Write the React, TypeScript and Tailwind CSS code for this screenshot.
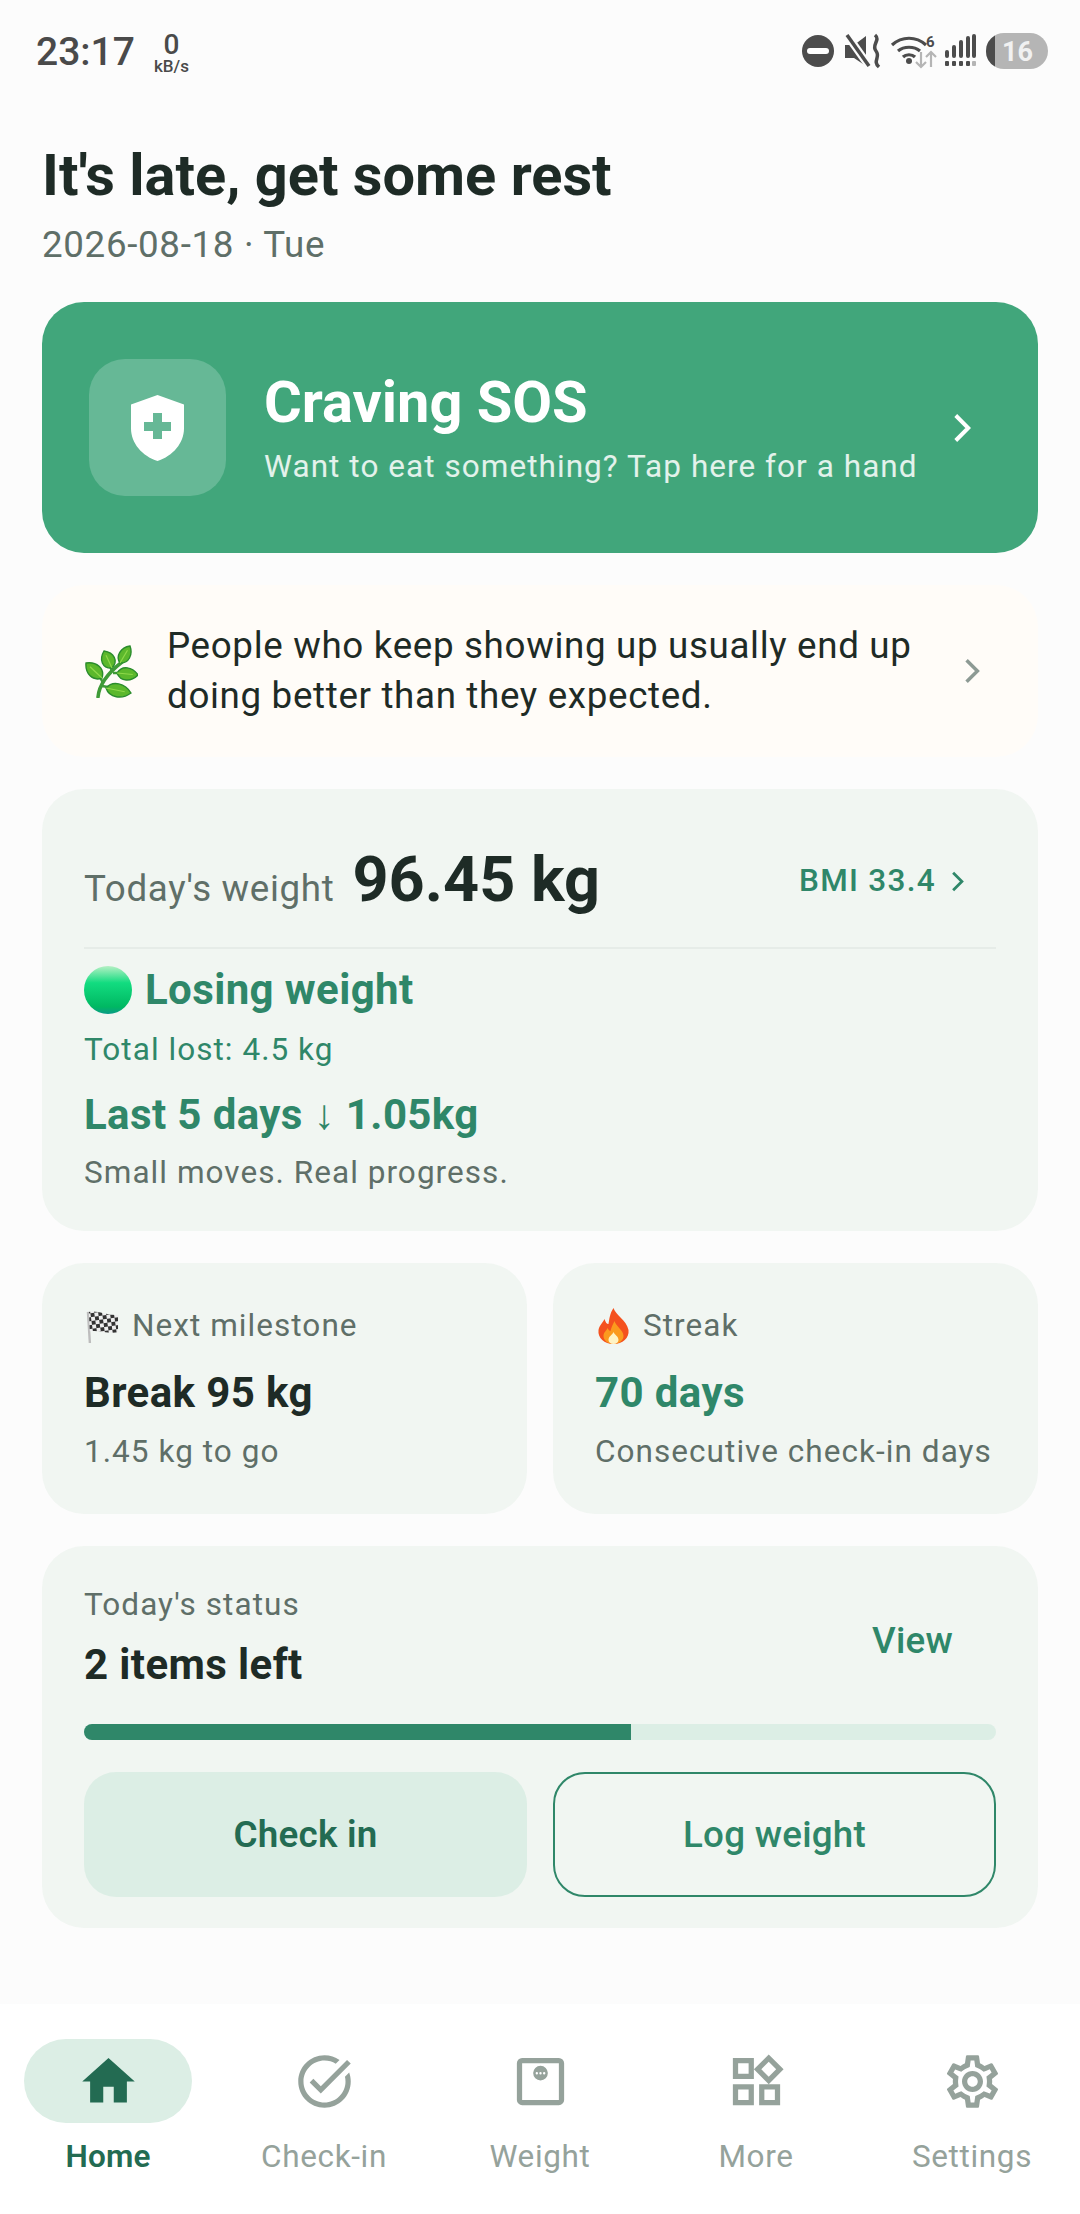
import type { ReactNode } from 'react'

const FONT = "font-['Roboto','Noto_Sans',sans-serif]"

function Chevron({ className }: { className: string }) {
  return (
    <svg viewBox="0 0 14 24" fill="none" stroke="currentColor" strokeWidth="3.2" className={className}>
      <path d="M2 2l10 10L2 22" />
    </svg>
  )
}

function StatusBar() {
  return (
    <div className="flex h-[102px] items-start justify-between pl-[36px] pr-[32px] pt-[33px] text-[#4a4a4a]">
      <div className="flex items-start">
        <span className="mt-[-1px] text-[39px] leading-[40px] font-medium">23:17</span>
        <div className="ml-[19px] flex flex-col items-center">
          <span className="text-[28px] leading-[24px] font-medium">0</span>
          <span className="mt-[1px] text-[17px] leading-[16px] font-medium">kB/s</span>
        </div>
      </div>
      <svg viewBox="0 0 246 36" className="h-[36px] w-[246px]">
        {/* dnd */}
        <circle cx="16" cy="18" r="16" fill="#4c4c4c" />
        <rect x="5" y="15" width="22" height="6" rx="3" fill="#fff" />
        {/* mute */}
        <path d="M43 12h9L64 3v30L52 25h-9z" fill="#4c4c4c" />
        <path d="M45 2l22 31" stroke="#fcfcfc" strokeWidth="8" />
        <path d="M45 2l22 31" stroke="#4c4c4c" strokeWidth="3.5" />
        <path d="M73 2c6 5-4 10 1 16 5 6-4 10 3 16" stroke="#4c4c4c" strokeWidth="3.5" fill="none" />
        {/* wifi */}
        <g fill="none" stroke="#4c4c4c" strokeWidth="3.2" transform="translate(2 0)">
          <path d="M88 12c10-9 24-9 34 0" />
          <path d="M94 18c6-5 16-5 22 0" />
          <path d="M99 24c3-3 9-3 12 0" />
        </g>
        <circle cx="107" cy="28" r="3" fill="#4c4c4c" />
        <text x="124" y="14" fontSize="15" fontWeight="700" fill="#4c4c4c">6</text>
        <path d="M119 19v15m-5-5l5 5 5-5M129 34V19m-5 5l5-5 5 5" stroke="#b5b5b5" strokeWidth="2.2" fill="none" />
        {/* signal */}
        <g fill="#4c4c4c">
          <rect x="143" y="17" width="4" height="8" rx="2" />
          <rect x="150" y="12" width="4" height="13" rx="2" />
          <rect x="157" y="7" width="4" height="18" rx="2" />
          <rect x="164" y="3" width="4" height="22" rx="2" />
          <rect x="170" y="1" width="4" height="24" rx="2" />
          <rect x="143" y="28" width="4" height="5" rx="1" />
          <rect x="150" y="28" width="4" height="5" rx="1" />
          <rect x="157" y="28" width="4" height="5" rx="1" />
          <rect x="164" y="28" width="4" height="5" rx="1" />
        </g>
        <rect x="170" y="28" width="4" height="5" rx="1" fill="#b5b5b5" />
        {/* battery */}
        <rect x="184" y="0" width="62" height="36" rx="18" fill="#b5b5b5" />
        <path d="M193 2.4A18 18 0 0 0 193 33.6z" fill="#4c4c4c" />
        <text x="200" y="28" fontSize="27" fontWeight="700" fill="#f1f1f1">16</text>
      </svg>
    </div>
  )
}

function SosCard() {
  return (
    <div className="flex h-[251px] items-center rounded-[42px] bg-[#41a67b] pl-[47px] pr-[67px]">
      <div className="flex h-[137px] w-[137px] shrink-0 items-center justify-center rounded-[36px] bg-[#66b896]">
        <svg viewBox="0 0 53 66" className="h-[66px] w-[53px]">
          <path fillRule="evenodd" fill="#fff" d="M26.5 0L53 9.5v24C53 48 42 61 26.5 66 11 61 0 48 0 33.5v-24zM22 18v9h-9v9h9v8h9v-8h9v-9h-9v-9z" />
        </svg>
      </div>
      <div className="ml-[38px] flex-1 pt-[4px]">
        <div className="text-[57.75px] leading-[60px] font-bold text-white">Craving SOS</div>
        <div className="mt-[15px] text-[31.5px] leading-[40px] tracking-[1.05px] text-white/85">Want to eat something? Tap here for a hand</div>
      </div>
      <Chevron className="h-[30px] w-[18px] text-white" />
    </div>
  )
}

// leaf from base to tip, w = half width
function leaf(bx: number, by: number, tx: number, ty: number, w: number) {
  const dx = tx - bx
  const dy = ty - by
  const len = Math.hypot(dx, dy)
  const nx = (-dy / len) * w
  const ny = (dx / len) * w
  const p = (f: number, s: number) => `${bx + dx * f + nx * s} ${by + dy * f + ny * s}`
  return `M${bx} ${by}C${p(0.2, 1.3)} ${p(0.7, 1.2)} ${tx} ${ty}C${p(0.7, -1.2)} ${p(0.2, -1.3)} ${bx} ${by}Z`
}

function Herb() {
  const leaves = [
    [27, 23, 19, 6, 7],
    [35, 18, 45, 1, 6],
    [17, 33, 1, 18, 7],
    [32, 28, 53, 30, 6.5],
    [21, 43, 46, 48, 7],
  ]
  return (
    <svg viewBox="0 0 53 53" className="h-[53px] w-[53px] shrink-0">
      <path d="M13 52c1-12 10-24 24-35" stroke="#3f9b38" strokeWidth="3.5" fill="none" strokeLinecap="round" />
      <path d="M28 28h8M17 41l6 1M18 38l-3-6M27 26l-2-5" stroke="#3f9b38" strokeWidth="2.5" />
      {leaves.map(([bx, by, tx, ty, w], i) => (
        <g key={i}>
          <path d={leaf(bx, by, tx, ty, w)} fill="#5cb82c" stroke="#2a8c2c" strokeWidth="1.4" />
          <path d={`M${bx} ${by}L${bx + (tx - bx) * 0.75} ${by + (ty - by) * 0.75}`} stroke="#8fd84a" strokeWidth="1.2" />
        </g>
      ))}
    </svg>
  )
}

function GreenDot() {
  return (
    <svg viewBox="0 0 48 48" className="h-[48px] w-[48px] shrink-0">
      <defs>
        <linearGradient id="dot" x1="0" y1="0" x2="0" y2="1">
          <stop offset="0" stopColor="#b5f0c4" />
          <stop offset="0.35" stopColor="#12dc80" />
          <stop offset="0.85" stopColor="#00b862" />
          <stop offset="1" stopColor="#0a9a88" />
        </linearGradient>
      </defs>
      <circle cx="24" cy="24" r="24" fill="url(#dot)" />
    </svg>
  )
}

function Flag() {
  return (
    <svg viewBox="0 0 34 34" className="h-[33px] w-[33px] shrink-0">
      <defs>
        <pattern id="check" width="8" height="8" patternUnits="userSpaceOnUse" patternTransform="rotate(-8)">
          <rect width="8" height="8" fill="#eee" />
          <rect width="4" height="4" fill="#333" />
          <rect x="4" y="4" width="4" height="4" fill="#333" />
        </pattern>
      </defs>
      <path d="M2 2l2 32" stroke="#bdbdbd" strokeWidth="2.5" />
      <path d="M3 2c9-2 18 4 30 3v18c-11 2-20-3-29-1z" fill="url(#check)" />
    </svg>
  )
}

function Fire() {
  return (
    <svg viewBox="0 0 32 36" className="h-[36px] w-[33px] shrink-0">
      <path d="M16 0c2 7 13 12 15 22 1 8-6 14-15 14S0 30 1 22c1-5 4-7 6-11 1 3 2 5 4 5 1-5 1-10 5-16z" fill="#f4511e" />
      <path d="M17 13c1 5 9 9 9 15 0 4-4 8-10 8S6 32 6 28c0-4 3-5 4-8 1 2 2 3 3 3 1-4 2-6 4-10z" fill="#fb9a1e" />
      <path d="M16 24c1 3 5 4 5 8 0 2-2 4-5 4s-5-2-5-4c0-4 4-5 5-8z" fill="#fff3c4" />
    </svg>
  )
}

function Card({ className, children }: { className: string; children: ReactNode }) {
  return <div className={`rounded-[42px] bg-[#f1f6f2] ${className}`}>{children}</div>
}

function Stat({ icon, label, value, valueColor, note }: { icon: ReactNode; label: string; value: string; valueColor: string; note: string }) {
  return (
    <Card className="h-[251px] pl-[42px] pt-[45px]">
      <div className="flex h-[36px] items-center gap-[13px] pl-[2px] text-[31.5px] tracking-[1.05px] text-[#5f6f68]">
        {icon}
        <span>{label}</span>
      </div>
      <div className={`mt-[24px] text-[42px] leading-[50px] font-bold tracking-[0.39px] ${valueColor}`}>{value}</div>
      <div className="mt-[14px] text-[31.5px] leading-[40px] tracking-[1.05px] text-[#5f6f68]">{note}</div>
    </Card>
  )
}

function NavItem({ label, active, path }: { label: string; active?: boolean; path: string }) {
  return (
    <div className="flex flex-col items-center">
      <div className={`flex h-[84px] w-[168px] items-center justify-center rounded-full ${active ? 'bg-[#dceee5]' : ''}`}>
        <svg viewBox="0 0 24 24" fillRule="evenodd" className={`h-[63px] w-[63px] ${active ? 'fill-[#236b52]' : 'fill-[#95a29b]'}`}>
          <path d={path} />
        </svg>
      </div>
      <span className={`mt-[14px] text-[31.5px] leading-[40px] ${active ? 'font-semibold tracking-[0.2px] text-[#236b52]' : 'tracking-[0.65px] text-[#95a29b]'}`}>{label}</span>
    </div>
  )
}

const HOME = 'M10 20v-6h4v6h5v-8h3L12 3 2 12h3v8z'
const CHECK = 'M22 5.18 10.59 16.6l-4.24-4.24 1.41-1.41 2.83 2.83 10-10L22 5.18zm-2.21 5.04c.13.57.21 1.17.21 1.78 0 4.42-3.58 8-8 8s-8-3.58-8-8 3.58-8 8-8c1.58 0 3.04.46 4.28 1.21l1.44-1.44C16.1 2.67 14.13 2 12 2 6.48 2 2 6.48 2 12s4.48 10 10 10 10-4.48 10-10c0-1.19-.22-2.33-.6-3.39l-1.61 1.61z'
const WEIGHT = 'M5 3h14a2 2 0 0 1 2 2v14a2 2 0 0 1-2 2H5a2 2 0 0 1-2-2V5a2 2 0 0 1 2-2zm0 2v14h14V5zm7 1a2.8 2.8 0 1 1 0 5.6A2.8 2.8 0 0 1 12 6zm-1.4 2.4a.45.45 0 1 0 0 .9.45.45 0 0 0 0-.9zm1.4 0a.45.45 0 1 0 0 .9.45.45 0 0 0 0-.9zm1.4 0a.45.45 0 1 0 0 .9.45.45 0 0 0 0-.9z'
const MORE = 'M16.66 4.52l2.83 2.83-2.83 2.83-2.83-2.83 2.83-2.83M9 5v4H5V5h4m10 10v4h-4v-4h4M9 15v4H5v-4h4m7.66-13.31L11 7.34 16.66 13l5.66-5.66-5.66-5.65zM11 3H3v8h8V3zm10 10h-8v8h8v-8zm-10 0H3v8h8v-8z'
const GEAR = 'M19.43 12.98c.04-.32.07-.64.07-.98 0-.34-.03-.66-.07-.98l2.11-1.65c.19-.15.24-.42.12-.64l-2-3.46c-.09-.16-.26-.25-.44-.25-.06 0-.12.01-.17.03l-2.49 1c-.52-.4-1.08-.73-1.69-.98l-.38-2.65C14.46 2.18 14.25 2 14 2h-4c-.25 0-.46.18-.49.42l-.38 2.65c-.61.25-1.17.59-1.69.98l-2.49-1c-.06-.02-.12-.03-.18-.03-.17 0-.34.09-.43.25l-2 3.46c-.13.22-.07.49.12.64l2.11 1.65c-.04.32-.07.65-.07.98 0 .33.03.66.07.98l-2.11 1.65c-.19.15-.24.42-.12.64l2 3.46c.09.16.26.25.44.25.06 0 .12-.01.17-.03l2.49-1c.52.4 1.08.73 1.69.98l.38 2.65c.03.24.24.42.49.42h4c.25 0 .46-.18.49-.42l.38-2.65c.61-.25 1.17-.59 1.69-.98l2.49 1c.06.02.12.03.18.03.17 0 .34-.09.43-.25l2-3.46c.12-.22.07-.49-.12-.64l-2.11-1.65zm-1.98-1.71c.04.31.05.52.05.73 0 .21-.02.43-.05.73l-.14 1.13.89.7 1.08.84-.7 1.21-1.27-.51-1.04-.42-.9.68c-.43.32-.84.56-1.25.73l-1.06.43-.16 1.13-.2 1.35h-1.4l-.19-1.35-.16-1.13-1.06-.43c-.43-.18-.83-.41-1.23-.71l-.91-.7-1.06.43-1.27.51-.7-1.21 1.08-.84.89-.7-.14-1.13c-.03-.31-.05-.54-.05-.74s.02-.43.05-.73l.14-1.13-.89-.7-1.08-.84.7-1.21 1.27.51 1.04.42.9-.68c.43-.32.84-.56 1.25-.73l1.06-.43.16-1.13.2-1.35h1.39l.19 1.35.16 1.13 1.06.43c.43.18.83.41 1.23.71l.91.7 1.06-.43 1.27-.51.7 1.21-1.07.85-.89.7.14 1.13zM12 8c-2.21 0-4 1.79-4 4s1.79 4 4 4 4-1.79 4-4-1.79-4-4-4zm0 6c-1.1 0-2-.9-2-2s.9-2 2-2 2 .9 2 2-.9 2-2 2z'

export default function App() {
  return (
    <div className={`flex h-[2214px] w-[1080px] flex-col bg-[#fcfcfc] ${FONT}`}>
      <StatusBar />
      <div className="flex-1 px-[42px]">
        <h1 className="mt-[41px] text-[57.75px] leading-[64px] font-bold text-[#1e2b26]">It's late, get some rest</h1>
        <p className="mt-[17px] text-[36.75px] leading-[42px] tracking-[0.656px] text-[#5f6f68]">2026-08-18 · Tue</p>

        <div className="mt-[36px] flex flex-col gap-[32px]">
          <SosCard />

          <div className="flex h-[172px] items-center rounded-[42px] bg-[#fffcf8] pl-[43px] pr-[58px]">
            <Herb />
            <p className="ml-[29px] flex-1 text-[36.75px] leading-[50px] tracking-[0.656px] text-[#1e2b26]">
              People who keep showing up usually end up
              <br />
              doing better than they expected.
            </p>
            <Chevron className="h-[26px] w-[16px] text-[#8d9a94]" />
          </div>

          <Card className="h-[442px] px-[42px] pt-[57px]">
            <div className="flex h-[70px] items-center justify-between">
              <div className="flex items-baseline">
                <span className="text-[36.75px] tracking-[0.656px] text-[#5f6f68]">Today's weight</span>
                <span className="ml-[18px] text-[63px] leading-[70px] font-bold text-[#1e2b26]">96.45 kg</span>
              </div>
              <div className="flex items-center gap-[15px] pr-[32px] text-[#2f8769]">
                <span className="text-[31.5px] font-medium tracking-[1.3px]">BMI 33.4</span>
                <Chevron className="h-[21px] w-[13px]" />
              </div>
            </div>
            <div className="mt-[31px] h-[2px] bg-[#e6ece8]" />
            <div className="mt-[16px] flex items-center gap-[13px] text-[#2f8769]">
              <GreenDot />
              <span className="text-[42px] leading-[50px] font-bold tracking-[0.39px]">Losing weight</span>
            </div>
            <div className="mt-[15px] text-[31.5px] leading-[40px] tracking-[1.05px] text-[#2f8769]">Total lost: 4.5 kg</div>
            <div className="mt-[20px] text-[42px] leading-[50px] font-bold tracking-[0.39px] text-[#2f8769]">Last 5 days ↓ 1.05kg</div>
            <div className="mt-[13px] text-[31.5px] leading-[40px] tracking-[1.05px] text-[#5f6f68]">Small moves. Real progress.</div>
          </Card>

          <div className="grid grid-cols-2 gap-[26px]">
            <Stat icon={<Flag />} label="Next milestone" value="Break 95 kg" valueColor="text-[#1e2b26]" note="1.45 kg to go" />
            <Stat icon={<Fire />} label="Streak" value="70 days" valueColor="text-[#2f8769]" note="Consecutive check-in days" />
          </div>

          <Card className="h-[382px] px-[42px] pt-[39px]">
            <div className="flex items-center justify-between">
              <div>
                <div className="text-[31.5px] leading-[40px] tracking-[1.05px] text-[#5f6f68]">Today's status</div>
                <div className="mt-[15px] text-[42px] leading-[50px] font-bold tracking-[0.39px] text-[#1e2b26]">2 items left</div>
              </div>
              <span className="mr-[43px] mt-[6px] text-[36.75px] font-medium tracking-[0.26px] text-[#2f8769]">View</span>
            </div>
            <div className="mt-[34px] h-[16px] overflow-hidden rounded-full bg-[#dceee5]">
              <div className="h-full w-[60%] bg-[#2f8769]" />
            </div>
            <div className="mt-[32px] grid grid-cols-2 gap-[26px]">
              <div className="flex h-[125px] items-center justify-center rounded-[32px] bg-[#dceee5] text-[36.75px] font-semibold tracking-[0.26px] text-[#236b52]">Check in</div>
              <div className="flex h-[125px] items-center justify-center rounded-[32px] border-[2.6px] border-[#2f8769] text-[36.75px] font-medium tracking-[0.26px] text-[#2f8769]">Log weight</div>
            </div>
          </Card>
        </div>
      </div>
      <nav className="grid h-[210px] grid-cols-5 bg-white pt-[35px]">
        <NavItem label="Home" active path={HOME} />
        <NavItem label="Check-in" path={CHECK} />
        <NavItem label="Weight" path={WEIGHT} />
        <NavItem label="More" path={MORE} />
        <NavItem label="Settings" path={GEAR} />
      </nav>
    </div>
  )
}
